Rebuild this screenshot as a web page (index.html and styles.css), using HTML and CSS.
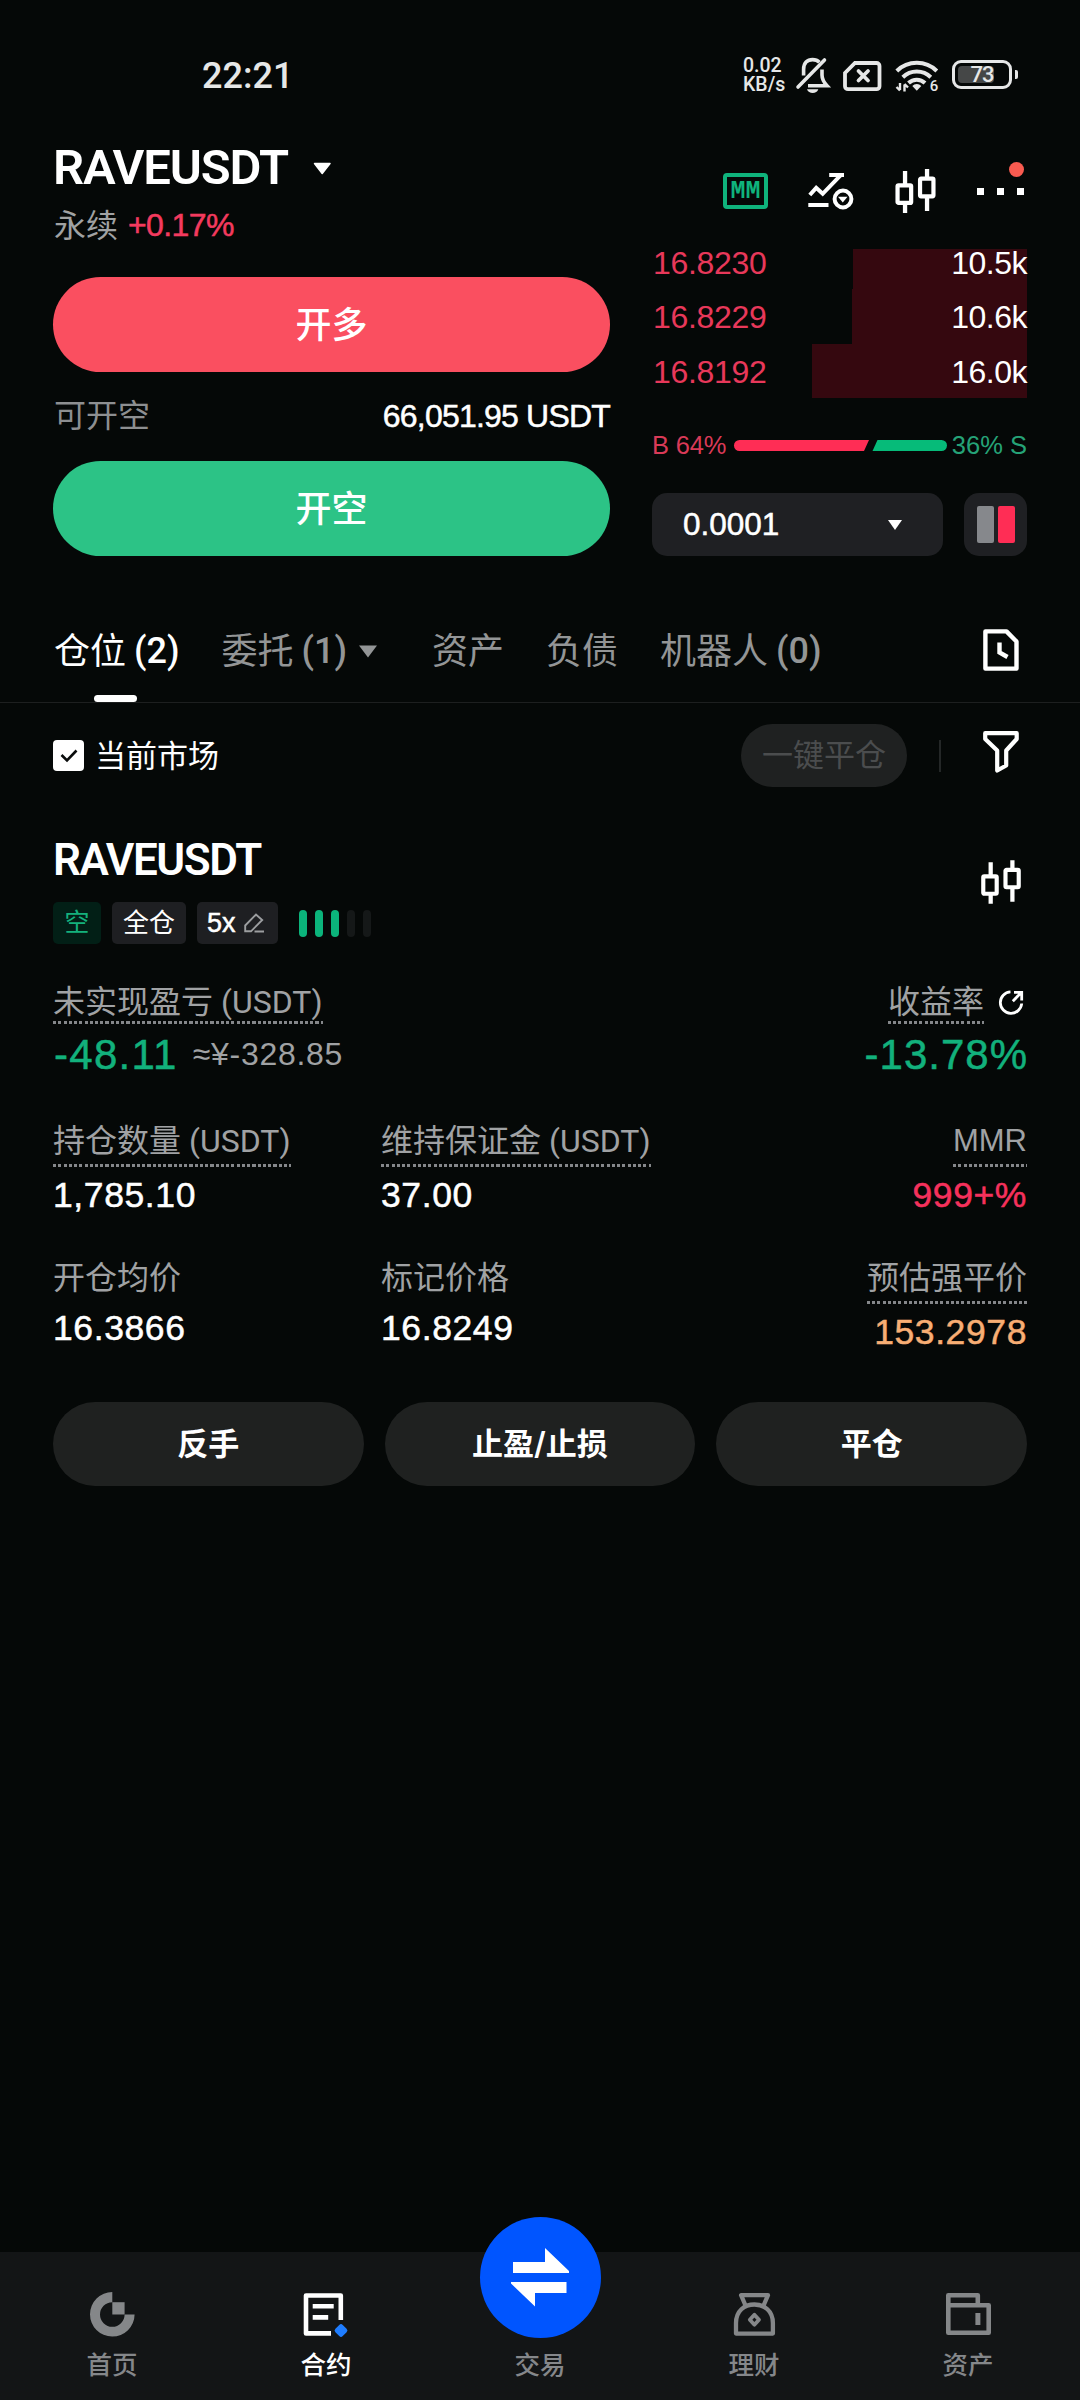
FILE: index.html
```html
<!DOCTYPE html>
<html lang="zh-CN">
<head>
<meta charset="utf-8">
<title>RAVEUSDT</title>
<link rel="stylesheet" href="styles.css">
</head>
<body>
<svg class="defs" aria-hidden="true">
  <symbol id="candles" viewBox="0 0 40.5 44">
    <path d="M9.8 2v13M9.8 35v9M31.8 0v9M31.8 29v13" fill="none" stroke="#fff" stroke-width="4.3"/>
    <rect x="2.3" y="16.3" width="13.6" height="17.6" rx="1" fill="none" stroke="#fff" stroke-width="4.2"/>
    <rect x="24.8" y="9.7" width="13.4" height="17.6" rx="1" fill="none" stroke="#fff" stroke-width="4.2"/>
  </symbol>
</svg>

<header class="status">
  <span class="clock">22:21</span>
  <div class="status-icons">
    <div class="speed"><span>0.02</span><span>KB/s</span></div>
    <svg class="bell" width="34" height="37" viewBox="0 0 34 37" fill="none" stroke="#e6e7e7" stroke-width="3.6">
      <path d="M7.6 18.5V12.5C7.6 6 11.2 2.6 16.6 2.6C19.4 2.6 21.8 3.6 23.4 5.2"/>
      <path d="M26 12.5V18C26 22.5 28 25.5 31 28.7H12"/>
      <path d="M2 30L28.5 3" stroke-linecap="round"/>
      <path d="M11 32.3h11.3c-.8 2.5-3 3.7-5.6 3.7s-4.9-1.2-5.7-3.7z" fill="#e6e7e7" stroke="none"/>
    </svg>
    <svg class="sim" width="39" height="31" viewBox="0 0 39 31" fill="none" stroke="#e6e7e7" stroke-width="3.8">
      <path d="M12 2H33.5a3 3 0 0 1 3 3V25.2a3 3 0 0 1-3 3H5a3 3 0 0 1-3-3V12Z"/>
      <path d="M15.5 10l9.500 9.500M25 10l-9.500 9.500" stroke-linecap="round"/>
    </svg>
    <svg class="wifi" width="44" height="34" viewBox="0 0 44 34" fill="none" stroke="#e6e7e7" stroke-width="4">
      <path d="M1.800 12A28.500 28.500 0 0 1 41.800 12M7.800 18.200A20 20 0 0 1 35.800 18.200M13.500 24A12 12 0 0 1 30 24"/>
      <path d="M17.300 27a6 6 0 0 1 9 0l-4.500 4.800z" fill="#e6e7e7" stroke="none"/>
      <path d="M5 24v7M1.500 28l3.500 3.500M9.500 32.500v-7M13 28.500l-3.500-3.500" stroke-width="2.400"/>
      <text x="34.800" y="32.200" class="wifi-gen">6</text>
    </svg>
    <div class="battery"><i class="battery-fill"></i><b>73</b></div>
  </div>
</header>

<section class="trade">
  <div class="trade-left">
    <h1 class="symbol"><span>RAVEUSDT</span><svg width="19" height="13" viewBox="0 0 19 13"><path d="M1.500 1.500H17L9.200 11.500Z" fill="#fff" stroke="#fff" stroke-width="1.500" stroke-linejoin="round"/></svg></h1>
    <div class="sub"><span>永续</span><span class="up num">+0.17%</span></div>
    <button class="order long">开多</button>
    <div class="avail"><span class="gray">可开空</span><span class="avail-val num">66,051.95 USDT</span></div>
    <button class="order short">开空</button>
  </div>
  <div class="trade-right">
    <div class="tools">
      <span class="mm"><b>MM</b></span>
      <svg class="trend" width="46" height="37" viewBox="0 0 46 37" fill="none" stroke="#fff" stroke-width="4">
        <path d="M1.800 22L8.200 14.800L14.700 20.800L32.500 2.300M21.200 2.100H36M.3 32H20.500"/>
        <circle cx="35" cy="26" r="8.400"/>
        <path d="M30 23.800H39.500L34.800 29.500Z" fill="#fff" stroke="none"/>
      </svg>
      <svg class="candles-top" width="41" height="44"><use href="#candles"/></svg>
      <span class="more"><i></i><i></i><i></i><em></em></span>
    </div>
    <div class="book">
      <div class="ask"><i class="depth" style="width:174px"></i><span class="price">16.8230</span><span class="qty">10.5k</span></div>
      <div class="ask"><i class="depth" style="width:175px"></i><span class="price">16.8229</span><span class="qty">10.6k</span></div>
      <div class="ask"><i class="depth" style="width:215px"></i><span class="price">16.8192</span><span class="qty">16.0k</span></div>
    </div>
    <div class="ratio">
      <span class="buy">B 64%</span>
      <svg width="213" height="11" viewBox="0 0 213 11"><path d="M5.500 0H135L130 11H5.500a5.500 5.500 0 0 1 0-11z" fill="#ff2d55"/><path d="M143.500 0H207.500a5.500 5.500 0 0 1 0 11H138.500z" fill="#06bb79"/></svg>
      <span class="sell">36% S</span>
    </div>
    <div class="precision">
      <div class="select"><span class="num">0.0001</span><svg width="14" height="10" viewBox="0 0 14 10"><path d="M0 0H14L7 10Z" fill="#fff"/></svg></div>
      <div class="layout"><i></i><i class="red"></i></div>
    </div>
  </div>
</section>

<nav class="tabs">
  <span class="tab active">仓位<b>(2)</b></span>
  <span class="tab orders">委托<b>(1)</b><svg width="18" height="13" viewBox="0 0 18 13"><path d="M0 .5H18L9 12.500Z" fill="#939596"/></svg></span>
  <span class="tab">资产</span>
  <span class="tab">负债</span>
  <span class="tab">机器人<b>(0)</b></span>
  <svg class="history" width="36" height="42" viewBox="0 0 36 42" fill="none" stroke="#fff" stroke-width="4.400" stroke-linejoin="round"><path d="M2.400 2.400H23.500L33.500 12.500V39.600H2.400Z"/><path d="M16.500 13.500V23.500L24.500 28" stroke-linejoin="miter"/></svg>
</nav>

<div class="filter">
  <span class="check"><svg width="18" height="14" viewBox="0 0 18 14"><path d="M1.500 6L7 11.500L16.500 1.500" fill="none" stroke="#0a0c0c" stroke-width="2.600"/></svg></span>
  <span class="market">当前市场</span>
  <span class="close-all">一键平仓</span>
  <i class="divider"></i>
  <svg class="funnel" width="36" height="42" viewBox="0 0 36 42" fill="none" stroke="#fff" stroke-width="4.200" stroke-linejoin="round"><path d="M2.200 2.200H33.700V8L23.200 19.500V34.500L14.200 39.500V19.500L2.200 8Z"/></svg>
</div>

<main class="position">
  <div class="head">
    <div>
      <h2>RAVEUSDT</h2>
      <div class="tags">
        <span class="tag side">空</span>
        <span class="tag mode">全仓</span>
        <span class="tag lever"><span class="num">5x</span><svg width="21" height="20" viewBox="0 0 21 20" fill="none" stroke="#9c9ea0" stroke-width="1.900"><path d="M1.200 12.500L12 1.500L18.200 7L7 18.300H1.200ZM10.500 18.500H20"/></svg></span>
        <span class="adl"><i class="on"></i><i class="on"></i><i class="on"></i><i></i><i></i></span>
      </div>
    </div>
    <svg class="candles-pos" width="40" height="44"><use href="#candles"/></svg>
  </div>

  <div class="pnl">
    <div>
      <div class="label tight dotted">未实现盈亏<span class="unit">(USDT)</span></div>
      <div class="big"><span class="green num pnl-val">-48.11</span><small>≈¥-328.85</small></div>
    </div>
    <div class="right">
      <div class="roi"><span class="label tight dotted">收益率</span><svg width="25" height="26" viewBox="0 0 25 26" fill="none" stroke="#fff" stroke-width="2.800"><path d="M11.500 1.900A10.700 10.700 0 1 0 22.700 13.500M13.800 11.200L22 2.800M15 2.400H22.700V10.500"/></svg></div>
      <div class="big"><span class="green num roi-val">-13.78%</span></div>
    </div>
  </div>

  <div class="stats first">
    <div><span class="label dotted">持仓数量<span class="unit">(USDT)</span></span><span class="val num">1,785.10</span></div>
    <div><span class="label dotted">维持保证金<span class="unit">(USDT)</span></span><span class="val num">37.00</span></div>
    <div class="right"><span class="label dotted mmr">MMR</span><span class="val num pink">999+%</span></div>
  </div>
  <div class="stats second">
    <div><span class="label">开仓均价</span><span class="val num">16.3866</span></div>
    <div><span class="label">标记价格</span><span class="val num">16.8249</span></div>
    <div class="right"><span class="label dotted">预估强平价</span><span class="val num orange">153.2978</span></div>
  </div>

  <div class="actions"><button>反手</button><button>止盈/止损</button><button>平仓</button></div>
</main>

<footer class="nav">
  <a class="item"><svg width="45" height="45" viewBox="0 0 45 45" fill="#858789"><path d="M22.300 0A22.300 22.300 0 1 0 44.600 22.500H34.600A12.300 12.300 0 1 1 22.300 10.200Z"/><path d="M22.300 10.200h12.300v12.300h-12.300z"/></svg><span>首页</span></a>
  <a class="item current"><svg width="45" height="45" viewBox="2.500 0 45 45" fill="none" stroke="#fff" stroke-width="4.600"><path d="M39.300 28V3.500H4.500V41.400H29.500" stroke-linejoin="round"/><path d="M11.200 14.200h21M11.200 25.400h15.500"/><rect x="34.300" y="33.300" width="10.400" height="10.400" rx="2.500" transform="rotate(45 39.500 38.500)" fill="#1f7dff" stroke="none"/></svg><span>合约</span></a>
  <a class="item"><span class="fab"><svg width="58" height="59" viewBox="0 0 58 59" fill="#fff"><path d="M2 14H34V0L58 23V25H2ZM0 34H55.500V45H24V58.500L0 35.500Z"/></svg></span><i class="slot"></i><span>交易</span></a>
  <a class="item"><svg width="45" height="45" viewBox="-1.800 -1 45 45" fill="none" stroke="#858789" stroke-width="4.300" stroke-linejoin="round"><path d="M11.500 12L7.300 2.200H34.200L30 12M2.200 40.600V30C2.200 18 10.500 11.500 20.600 11.500S39.100 18 39.100 30V40.600Z"/><path d="M20.600 21.700l4.600 5l-4.600 5l-4.600-5z" stroke-width="3.800"/></svg><span>理财</span></a>
  <a class="item"><svg width="45" height="45" viewBox="0 -1 45 45" fill="none" stroke="#858789" stroke-width="4.600" stroke-linejoin="round"><path d="M2.300 12.300V2.300H31.800V12.300M2.300 12.300H42.700V39.700H2.300Z"/><path d="M31.900 20V32" stroke-width="5"/></svg><span>资产</span></a>
</footer>
</body>
</html>
```
FILE: styles.css
```css
* { box-sizing: border-box; margin: 0; padding: 0; }

body {
  width: 1080px;
  height: 2400px;
  display: flex;
  flex-direction: column;
  overflow: hidden;
  background: #050807;
  color: #fff;
  font-family: Inter, "Noto Sans CJK SC", sans-serif;
  font-size: 32px;
}

button { border: 0; color: #fff; font-family: inherit; }
svg { display: block; flex: none; overflow: visible; }
i, em { font-style: normal; }
.defs { position: absolute; width: 0; height: 0; }
.gray { color: #8d8f91; }
.green { color: #12b17c; }

/* medium-weight figures */
.num { font-family: "Liberation Sans", Arial, sans-serif; -webkit-text-stroke: .5px currentColor; }

/* status bar */
.status {
  height: 120px;
  flex: none;
  display: flex;
  justify-content: space-between;
  padding: 50px 62px 0 202px;
  color: #e6e7e7;
}
.clock { height: 50px; margin-top: 1px; font: 500 36px/50px Roboto, sans-serif; }
.status-icons { display: flex; align-items: flex-start; }
.speed {
  display: flex;
  flex-direction: column;
  width: 53px;
  padding-top: 7px;
  font: 500 19.5px/18.5px Roboto, sans-serif;
}
.bell { margin-top: 7px; }
.sim { margin: 11px 0 0 13px; }
.wifi { margin: 9px 0 0 13px; }
.wifi-gen { font: 500 15px Roboto, sans-serif; fill: #e6e7e7; stroke: none; }
.battery {
  position: relative;
  width: 60px;
  height: 29px;
  margin: 10px 6px 0 13px;
  border: 3px solid #e6e7e7;
  border-radius: 9px;
  text-align: center;
}
.battery::after {
  content: "";
  position: absolute;
  right: -9px;
  top: 7px;
  width: 3px;
  height: 9px;
  border-radius: 0 2px 2px 0;
  background: #e6e7e7;
}
.battery-fill {
  position: absolute;
  left: 3px;
  top: 3px;
  width: 36px;
  height: 17px;
  border-radius: 4px;
  background: #454747;
}
.battery b { position: relative; display: block; font: 500 22px/24px Roboto, sans-serif; letter-spacing: -1px; }

/* trading area */
.trade {
  height: 436px;
  flex: none;
  display: grid;
  grid-template-columns: 557px 375px;
  justify-content: space-between;
  padding: 0 53px;
}
.symbol {
  display: flex;
  align-items: center;
  height: 57px;
  margin-top: 18px;
  padding-top: 1px;
  font: 600 49px/57px Roboto, sans-serif;
  letter-spacing: -1.15px;
}
.symbol svg { margin: 2px 0 0 25px; }
.sub { display: flex; gap: 10px; height: 40px; margin-top: 10px; line-height: 41px; padding-left: 1px; color: #a0a2a3; }
.sub .up { color: #f33a5e; letter-spacing: -.6px; }
.order { display: block; width: 100%; height: 95px; border-radius: 48px; font-size: 36px; font-weight: 500; line-height: 92px; }
.long { margin-top: 32px; background: #fa4f60; }
.short { background: #2cc386; }
.avail { display: flex; justify-content: space-between; height: 89px; line-height: 88px; }
.avail .gray { padding-left: 1px; }
.avail-val { letter-spacing: -.8px; }

.tools { position: relative; display: flex; align-items: flex-start; height: 129px; padding: 49px 0 0 71px; }
.mm { width: 45px; height: 36px; margin-top: 4px; border: 4px solid #0fb37c; border-radius: 4px; color: #0fb37c; text-align: center; }
.mm b { display: block; margin: 0 -4px; font: 700 25px/29px "Liberation Mono", monospace; }
.trend { margin: 4px 0 0 40px; }
.candles-top { margin-left: 41px; }
.more { position: relative; display: flex; gap: 13px; margin: 19px 0 0 41px; }
.more i { width: 7px; height: 7px; background: #fff; }
.more em { position: absolute; right: 0; top: -26px; width: 15px; height: 15px; border-radius: 50%; background: #f95b50; }

.book { height: 149px; font-family: "Liberation Sans", Arial, sans-serif; }
.ask { position: relative; display: flex; justify-content: space-between; height: 54.5px; line-height: 56px; font-size: 32px; }
.ask:first-child { height: 40px; line-height: 28px; }
.depth { position: absolute; right: 0; top: 0; bottom: 0; background: #35080f; }
.price { position: relative; padding-left: 1px; letter-spacing: -.3px; color: #e8385a; }
.qty { position: relative; letter-spacing: -.5px; }
.ratio { display: flex; align-items: center; height: 23px; margin-top: 36px; font: 25.5px/23px "Liberation Sans", Arial, sans-serif; white-space: nowrap; }
.ratio svg { margin: 0 5px 0 auto; }
.buy { letter-spacing: -.2px; color: #d93a57; }
.sell { color: #25a377; }
.precision { display: flex; justify-content: space-between; margin-top: 36px; }
.select { display: flex; align-items: center; justify-content: space-between; width: 291px; height: 63px; padding: 0 41px 0 31px; border-radius: 15px; background: #1f2023; font-size: 31.5px; }
.layout { display: flex; align-items: center; justify-content: center; gap: 4px; width: 63px; height: 63px; border-radius: 15px; background: #1f2023; }
.layout i { width: 17px; height: 37px; border-radius: 2px; background: #86888c; }
.layout .red { background: #ff2d55; }

/* tabs */
.tabs {
  display: flex;
  align-items: center;
  gap: 42px;
  height: 147px;
  flex: none;
  padding: 44px 61px 0 54px;
  border-bottom: 1px solid #1d1f1f;
  color: #939596;
  font-size: 36px;
  line-height: 40px;
}
.tab { position: relative; display: flex; align-items: center; }
.tab b { font: 500 36px/40px Roboto, sans-serif; margin-left: 8px; }
.active { color: #fff; }
.active::after { content: ""; position: absolute; left: 40px; bottom: -31px; width: 43px; height: 7px; border-radius: 4px; background: #fff; }
.orders { margin-right: 13px; }
.orders svg { margin-left: 12px; }
.history { margin: 0 0 2px auto; }

/* filter row */
.filter { display: flex; align-items: center; height: 105px; flex: none; padding: 0 61px 0 53px; font-size: 31px; }
.check { display: flex; align-items: center; justify-content: center; width: 31px; height: 31px; border-radius: 4px; background: #fff; }
.market { margin-left: 11px; line-height: 40px; }
.close-all { width: 166px; height: 63px; margin-left: auto; border-radius: 32px; background: #1f2121; color: #4b4d4e; text-align: center; line-height: 62px; }
.divider { width: 2px; height: 32px; margin: 0 42px 0 32px; background: #242727; }
.funnel { margin-bottom: 7px; }

/* position card */
.position { display: block; padding: 0 53px; }
.head { display: flex; justify-content: space-between; }
h2 { height: 55px; margin-top: 24px; font: 600 44px/57px Roboto, sans-serif; letter-spacing: -1.4px; }
.tags { display: flex; margin-top: 15px; font-size: 25px; line-height: 41px; }
.tag { height: 42px; border-radius: 5px; background: #1e1f22; text-align: center; }
.side { width: 48px; background: #021f16; color: #14b17d; }
.mode { width: 74px; margin-left: 11px; font-size: 26px; }
.lever { display: flex; align-items: center; width: 81px; margin-left: 11px; padding-left: 10px; font-size: 27px; line-height: 42px; }
.lever svg { margin-left: 8px; }
.adl { display: flex; gap: 8px; margin: 8px 0 0 21px; }
.adl i { width: 8px; height: 27px; border-radius: 4px; background: #151818; }
.adl .on { background: #0bb47b; }
.candles-pos { margin: 52px 6px 0 0; }

.label { display: block; width: fit-content; height: 47px; color: #a0a2a4; line-height: 48px; white-space: nowrap; }
.dotted { height: 50px; border-bottom: 3px solid transparent; background: repeating-linear-gradient(90deg, #85878a 0 3px, transparent 3px 5.25px) 0 100% / 100% 3px no-repeat border-box; }
.tight { height: 43px; line-height: 41px; }
.unit { margin-left: 8px; font-family: Roboto, sans-serif; }
.mmr { font-family: "Liberation Sans", Arial, sans-serif; font-size: 31px; }
.right { display: flex; flex-direction: column; align-items: flex-end; }
.pnl { display: flex; justify-content: space-between; margin-top: 37px; }
.big { display: flex; align-items: center; height: 60px; font: 42px/61px "Liberation Sans", Arial, sans-serif; }
.big small { margin-left: 15px; font-size: 32px; letter-spacing: .7px; color: #a0a2a4; }
.pnl-val { padding-left: 1px; letter-spacing: 1.3px; }
.roi-val { margin-right: -1px; letter-spacing: 1px; }
.roi { display: flex; align-items: flex-start; }
.roi svg { margin: 9px 3px 0 15px; }
.stats { display: grid; grid-template-columns: 328px 328px 1fr; }
.first { margin-top: 33px; }
.second { margin-top: 31px; }
.val { display: block; height: 56px; line-height: 56px; font-size: 35.5px; letter-spacing: .6px; }
.second .val { height: 53px; line-height: 54px; }
.second .right .val { height: 56px; line-height: 57px; }
.pink { color: #f5315c; }
.orange { color: #f8ae74; }
.actions { display: grid; grid-template-columns: repeat(3, 1fr); gap: 21px; margin-top: 42px; }
.actions button { height: 84px; border-radius: 42px; background: #1f2120; font-size: 31px; font-weight: 600; line-height: 82px; }

/* bottom navigation */
.nav { display: flex; height: 148px; flex: none; margin-top: auto; padding: 0 5px; background: #131516; color: #85878a; font-size: 25.5px; font-weight: 500; line-height: 30px; }
.item { position: relative; flex: 1; display: flex; flex-direction: column; align-items: center; gap: 13px; padding-top: 40px; }
.slot { height: 45px; }
.current { color: #fff; }
.fab { position: absolute; left: 50%; top: -35px; width: 121px; height: 121px; margin-left: -60.5px; display: flex; align-items: center; justify-content: center; border-radius: 50%; background: #0055ff; }
```
